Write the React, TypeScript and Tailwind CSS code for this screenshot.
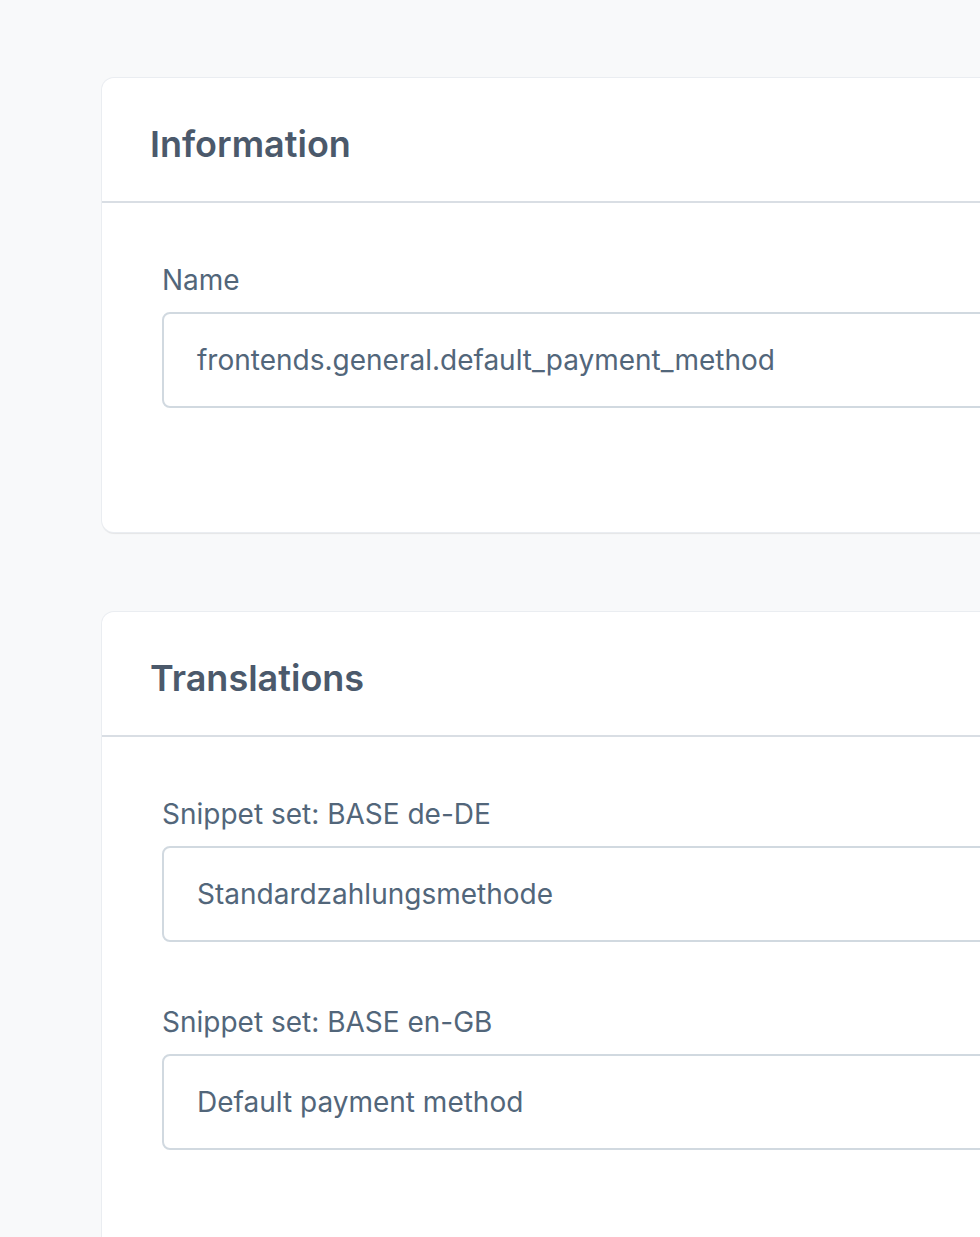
const font = { fontFamily: "Inter, 'Noto Sans', sans-serif" };

function Field({ label, value }: { label: string; value: string }) {
  return (
    <div className="flex flex-col">
      <label className="text-[28px] leading-[42px] text-[#52667a]">{label}</label>
      <div className="mt-[11px] flex h-[96px] items-center rounded-[8px] border-2 border-[#d1d9e0] bg-white px-[33px]">
        <span className="text-[28px] text-[#52667a]">{value}</span>
      </div>
    </div>
  );
}

function Card({ title, children }: { title: string; children: React.ReactNode }) {
  return (
    <div className="w-[1200px] rounded-[12px] bg-white shadow-[0_0_0_1px_#eaedf1,0_2px_1px_rgba(0,0,0,0.08)]">
      <div className="flex h-[125px] items-center border-b-2 border-[#d9dee4] px-[48px] pt-[8px]">
        <h2 className="text-[36px] font-semibold text-[#4b596b]">{title}</h2>
      </div>
      <div className="flex flex-col gap-[59px] px-[60px] pb-[124px] pt-[56px]">{children}</div>
    </div>
  );
}

export default function App() {
  return (
    <div className="h-[1237px] w-[980px] overflow-hidden bg-[#f8f9fa] pl-[102px] pt-[78px]" style={font}>
      <div className="flex flex-col gap-[80px]">
        <Card title="Information">
          <Field label="Name" value="frontends.general.default_payment_method" />
        </Card>
        <Card title="Translations">
          <Field label="Snippet set: BASE de-DE" value="Standardzahlungsmethode" />
          <Field label="Snippet set: BASE en-GB" value="Default payment method" />
        </Card>
      </div>
    </div>
  );
}
